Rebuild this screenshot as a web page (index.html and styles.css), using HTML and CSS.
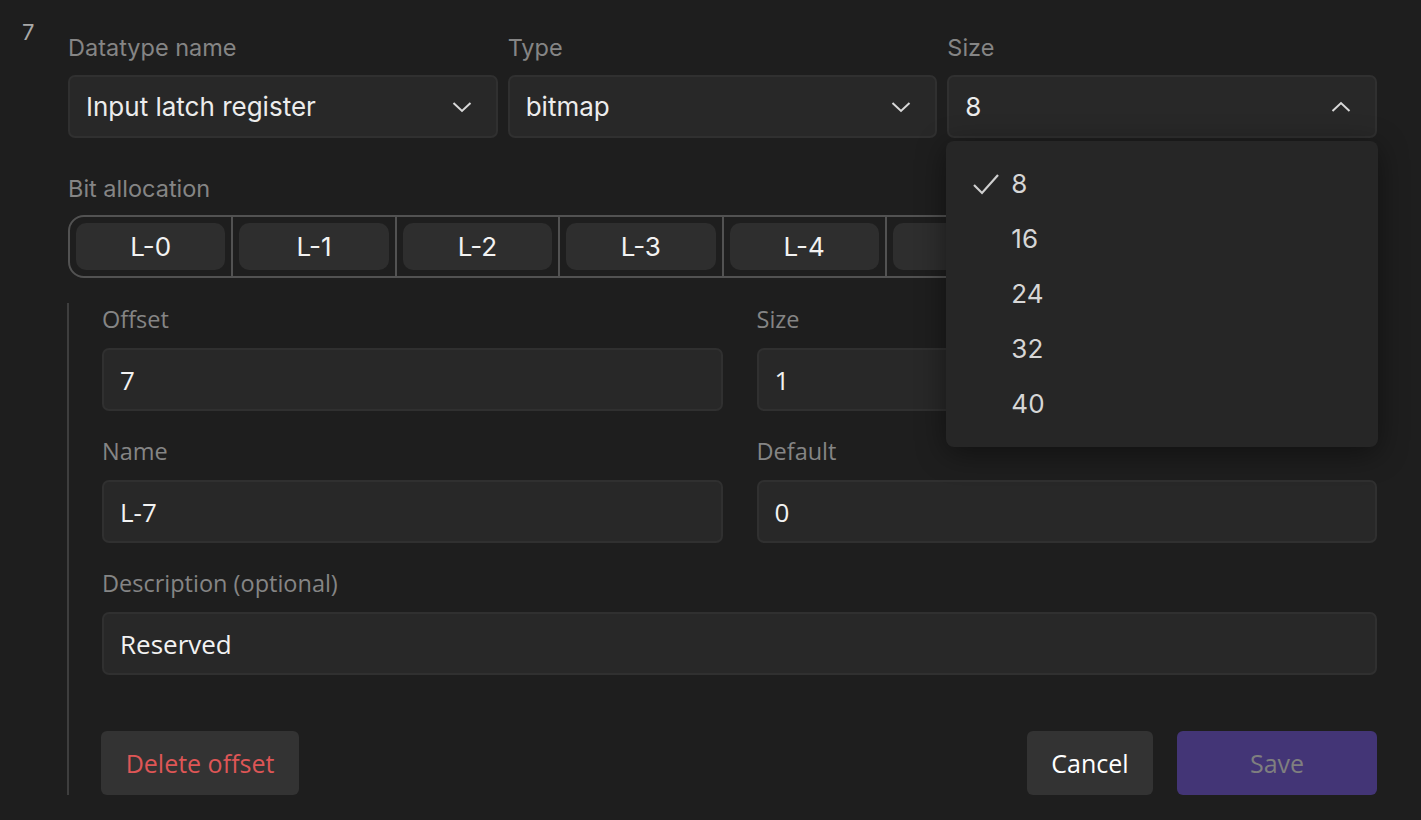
FILE: index.html
```html
<!DOCTYPE html>
<html>
<head>
<meta charset="utf-8">
<link rel="stylesheet" href="styles.css">
</head>
<body>
<div class="page">
  <div class="index">7</div>
  <div class="main">
    <div class="top-row">
      <div class="field">
        <div class="label">Datatype name</div>
        <div class="select"><span>Input latch register</span>
          <svg class="chev" viewBox="0 0 20 12"><path d="M1.5 2 L10 10 L18.5 2" /></svg></div>
      </div>
      <div class="field">
        <div class="label">Type</div>
        <div class="select"><span>bitmap</span>
          <svg class="chev" viewBox="0 0 20 12"><path d="M1.5 2 L10 10 L18.5 2" /></svg></div>
      </div>
      <div class="field size-field">
        <div class="label">Size</div>
        <div class="select"><span>8</span>
          <svg class="chev" viewBox="0 0 20 12"><path d="M1.5 10 L10 2 L18.5 10" /></svg></div>
        <div class="menu">
          <div class="item selected"><svg class="check" viewBox="0 0 28 24"><path d="M2 13 L10 21 L26 3" /></svg><span>8</span></div>
          <div class="item"><span>16</span></div>
          <div class="item"><span>24</span></div>
          <div class="item"><span>32</span></div>
          <div class="item"><span>40</span></div>
        </div>
      </div>
    </div>

    <div class="label bit-label">Bit allocation</div>
    <div class="bits">
      <div class="seg"><div class="pill">L-0</div></div>
      <div class="seg"><div class="pill">L-1</div></div>
      <div class="seg"><div class="pill">L-2</div></div>
      <div class="seg"><div class="pill">L-3</div></div>
      <div class="seg"><div class="pill">L-4</div></div>
      <div class="seg"><div class="pill">L-5</div></div>
      <div class="seg"><div class="pill">L-6</div></div>
      <div class="seg"><div class="pill">L-7</div></div>
    </div>

    <div class="detail">
      <div class="grid">
        <div class="dfield">
          <div class="dlabel">Offset</div>
          <div class="input">7</div>
        </div>
        <div class="dfield">
          <div class="dlabel">Size</div>
          <div class="input">1</div>
        </div>
        <div class="dfield">
          <div class="dlabel">Name</div>
          <div class="input">L-7</div>
        </div>
        <div class="dfield">
          <div class="dlabel">Default</div>
          <div class="input">0</div>
        </div>
        <div class="dfield wide">
          <div class="dlabel">Description (optional)</div>
          <div class="input">Reserved</div>
        </div>
      </div>
      <div class="actions">
        <button class="btn delete">Delete offset</button>
        <div class="right">
          <button class="btn cancel">Cancel</button>
          <button class="btn save">Save</button>
        </div>
      </div>
    </div>
  </div>
</div>
</body>
</html>
```

FILE: styles.css
```css
html, body {
  margin: 0;
  padding: 0;
  background: #1e1e1e;
  width: 1421px;
  height: 820px;
  overflow: hidden;
}
body {
  font-family: Inter, "Noto Sans", sans-serif;
  color: #ececec;
}
.page {
  display: flex;
  padding: 18px 0 0 22px;
}
.index {
  width: 46px;
  font-size: 22px;
  color: #a8a8a8;
  line-height: 28px;
}
.main {
  width: 1309px;
  display: flex;
  flex-direction: column;
}
.top-row {
  display: flex;
  gap: 10px;
  padding-top: 15px;
}
.field {
  flex: 1;
  display: flex;
  flex-direction: column;
  position: relative;
}
.label {
  font-size: 23.5px;
  color: #858585;
  line-height: 30px;
  height: 30px;
  margin-bottom: 12px;
}
.select {
  box-sizing: border-box;
  height: 63px;
  background: #282828;
  border: 2px solid #303030;
  border-radius: 7px;
  display: flex;
  align-items: center;
  justify-content: space-between;
  padding: 0 24px 0 16px;
  font-size: 26px;
}
.chev {
  width: 20px;
  height: 12px;
  fill: none;
  stroke: #d8d8d8;
  stroke-width: 2;
}
.menu {
  position: absolute;
  top: 108px;
  left: -1px;
  right: -1px;
  height: 306px;
  box-sizing: border-box;
  background: #262626;
  border-radius: 8px;
  box-shadow: 0 6px 30px rgba(0,0,0,0.45);
  padding: 15px 0;
  z-index: 5;
}
.item {
  height: 55px;
  display: flex;
  align-items: center;
  padding-left: 65px;
  position: relative;
  font-size: 26px;
  color: #d6d6d6;
}
.check {
  position: absolute;
  left: 26px;
  top: 16px;
  width: 28px;
  height: 24px;
  fill: none;
  stroke: #cfcfcf;
  stroke-width: 2.2;
}
.bit-label {
  margin-top: 36px;
  margin-bottom: 11px;
}
.bits {
  display: flex;
  height: 63px;
  box-sizing: border-box;
  border: 2px solid #525252;
  border-radius: 16px 0 0 16px;
  width: 1309px;
}
.seg {
  flex: 1;
  padding: 6px 6px;
  border-left: 2px solid #525252;
  display: flex;
}
.seg:first-child {
  border-left: none;
}
.pill {
  flex: 1;
  background: #2e2e2e;
  border-radius: 10px;
  display: flex;
  align-items: center;
  justify-content: center;
  font-size: 26px;
  color: #f2f2f2;
}
.detail {
  margin-top: 25px;
  border-left: 2px solid #3e3e3e;
  margin-left: -1px;
  padding-left: 33px;
  height: 492px;
  display: flex;
  flex-direction: column;
  font-family: "Open Sans", "Noto Sans", sans-serif;
}
.grid {
  display: grid;
  grid-template-columns: 1fr 1fr;
  column-gap: 34px;
  row-gap: 24px;
}
.wide {
  grid-column: 1 / span 2;
}
.dlabel {
  font-size: 23.5px;
  color: #858585;
  line-height: 32px;
  height: 32px;
  margin-bottom: 13px;
}
.input {
  height: 63px;
  box-sizing: border-box;
  background: #282828;
  border: 2px solid #303030;
  border-radius: 7px;
  display: flex;
  align-items: center;
  padding-left: 16px;
  font-size: 26px;
  color: #f2f2f2;
}
.actions {
  margin-top: auto;
  display: flex;
  justify-content: space-between;
}
.right {
  display: flex;
  gap: 24px;
}
.btn {
  height: 64px;
  border: none;
  border-radius: 6px;
  font-family: "Open Sans", "Noto Sans", sans-serif;
  font-size: 25px;
  padding: 0;
}
.delete {
  width: 198px;
  background: #333333;
  color: #de5656;
  margin-left: -1px;
}
.cancel {
  width: 126px;
  background: #333333;
  color: #ffffff;
}
.save {
  width: 200px;
  background: #433576;
  color: #7f7f7f;
}
```
